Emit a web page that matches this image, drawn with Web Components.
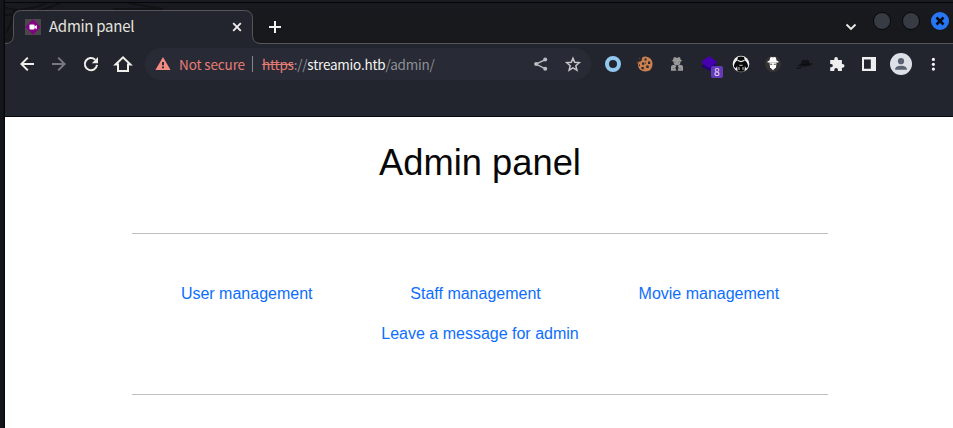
<!DOCTYPE html>
<html lang="en">
<head>
<meta charset="utf-8">
<title>Admin panel</title>
<style>
html,body{margin:0;height:100%;background:#15161b;overflow:hidden}
</style>
</head>
<body>
<browser-window></browser-window>
<script>
const define = (name, html) => customElements.define(name, class extends HTMLElement {
  constructor() {
    super();
    this.attachShadow({mode: 'open'}).innerHTML = html;
  }
});

const icons = {
  back: '<path d="M18 9v2H7.800l4.700 4.700-1.400 1.400L4 10l7.100-7.100 1.400 1.400L7.800 9z" fill="#eff0ea"/>',
  forward: '<path d="M4 9v2h10.200l-4.700 4.700 1.400 1.400L18 10l-7.100-7.100-1.400 1.400L14.200 9z" fill="#77797e"/>',
  reload: '<path d="M17 10.9A6.1 6.1 0 1 1 15.2 5.7" fill="none" stroke="#eff0ea" stroke-width="2"/><path d="M18 3v6.2h-6.2z" fill="#eff0ea"/>',
  home: '<path d="M3.600 10.500 11 3.400l7.400 7.100H16V17H6v-6.500z" fill="none" stroke="#eff0ea" stroke-width="2"/>',
  share: '<path d="M15.500 5.600 6 10l9.500 4.800" fill="none" stroke="#bbbdc0" stroke-width="1.4"/><g fill="#bbbdc0"><circle cx="15.200" cy="5.500" r="2"/><circle cx="6.200" cy="10" r="2.100"/><circle cx="15.200" cy="14.800" r="2"/></g>',
  star: '<path d="m11 4.6 1.7 4.1 4.6.4-3.5 3 1.1 4.5-3.900-2.400-3.900 2.400 1.100-4.500-3.500-3 4.600-.4z" transform="translate(0 -.4)" fill="none" stroke="#c4c6c8" stroke-width="1.5"/>',
  ring: '<circle cx="11" cy="10" r="6" fill="none" stroke="#91c8f0" stroke-width="4"/>',
  cookie: '<path d="M8 3.7q2.1-1.8 4.8-1 5.5 1.3 5.8 7-.3 7.6-7.4 7.9Q4.8 17.2 4 11.2q0-2 .9-3.6Q8.3 7.700 8 3.700" fill="#c88051"/><g fill="#302622"><path d="M10.500 4.500h2v2h-2zM14 7.500h2.200v2.500H14zM8 8.500h2.300v2.300H8zM12.300 11.500h2.400v2.400h-2.400zM7.500 13h2.300v2.300H7.500zM11 8.500h1v1h-1zM5 10.500h1v1.500H5z"/></g><path d="M3.3 7v3M4.8 4.5h1.5" stroke="#68442f"/>',
  agent: '<g fill="#999a99"><path d="M7.200 4.700 8 3.300h1.500l1.500.8 1.500-.8H14l.8 2.600 1.800.8-2 .8q0 2.900-2 3.800H9.400q-2-.9-2-3.800l-2-.8 1.800-.8z"/><path d="m5.800 11.300 3-.5 1.400 1.400-.8 1.600 1 3H5v-4zM16.200 11.300l-3-.5-1.400 1.400.8 1.600-1 3H17v-4z"/></g><path d="M8.300 8h1.700M12 8h1.700M8.500 14.500H7M15 14.500h-1.500" stroke="#6c6e71" stroke-width=".8"/>',
  layers: '<path d="m3 12.400 4.500-3.200 11.300.6L11.500 16.700z" fill="#260078"/><path d="m11 2 8.300 6-8.300 5.900L3 8z" fill="#4700b0"/>',
  gorilla: '<circle cx="11" cy="10" r="8.300" fill="#f1f1ef"/><path d="M8 3q3-1.200 6 0l.8 3.500q2.700 1.500 3.400 6l-2 2-1.300-2.500-.4 5-1.500.7H9l-1.500-.7-.4-5-1.300 2.500-2-2q.7-4.500 3.400-6z" fill="#08090a"/><path d="m7.500 5.800 3.500 1.300 3.500-1.300v1.100L11 8.200 7.500 6.900z" fill="#eee"/><path d="M9.300 11.300h3.400M9 13v3M13 13v3" stroke="#ddd" stroke-width=".9"/>',
  incognito: '<circle cx="11" cy="10" r="8" fill="#363433"/><path d="m8.200 3.600 1.600-.5 1.200.5 1.400-.5 1.500.5.6 3 2 1v1H5.500v-1l2-1z" fill="#fff"/><path d="M7.500 8.500h7l-.5 4.800-3 3-3-3z" fill="#fff"/><path d="M8.200 9.700h2v1h-2zM11.800 9.700h2v1h-2z" fill="#413f40"/>',
  hat: '<path d="M7.300 9.300Q7.500 5.500 10 5.800q1.200.6 2.200 0 3-.5 3.300 2.200v1.400l3.200-.5q-1 3.300-7.700 3.500-6.500.2-7.500-1.500 2.200.2 3.800-1.600" fill="#121317"/><path d="M3 14q2.500.5 4.500-.5M7.500 10.200q4.200 1.100 8-.5" fill="none" stroke="#0b0c0f"/>',
  puzzle: '<path d="M4.200 6.100h4.100V5q0-2 1.800-2t1.800 2v1.100h4V10h.6q2 0 2 1.800t-2 1.900h-.6V17h-4v-1.200q0-1.800-1.800-1.800t-1.800 1.800V17H4.200v-3.800h.9q1.800 0 1.800-1.600T5.100 10h-.9z" fill="#efeff0"/>',
  sidebar: '<path d="M4 3h14v14H4zm2 2.500v9.300h6.800V5.500z" fill="#efeff0" fill-rule="evenodd"/>',
  person: '<circle cx="11" cy="10" r="11" fill="#dde1e7"/><circle cx="11" cy="7.200" r="3.100" fill="#5b6373"/><path d="M5 15.700q0-4 6-4t6 4z" fill="#5b6373"/>',
  dots: '<g fill="#f2f2f2"><circle cx="11.400" cy="5.400" r="1.600"/><circle cx="11.400" cy="10.300" r="1.600"/><circle cx="11.400" cy="15.100" r="1.600"/></g>',
  warn: '<path d="m11 3 7.600 13.100H3.400z" fill="#f28b82"/><path d="M11 8v3.200M11 12.400v1.800" stroke="#282a35" stroke-width="2"/>'
};

customElements.define('tool-icon', class extends HTMLElement {
  constructor() {
    super();
    this.attachShadow({mode: 'open'});
  }
  connectedCallback() {
    this.shadowRoot.innerHTML = `<style>
      :host{display:flex;width:32px;height:32px;align-items:center;justify-content:center;position:relative;flex:none}
      svg{width:22px;height:22px;overflow:visible;display:block}
      ::slotted(b){position:absolute;left:18px;top:18px;width:12px;height:12px;border-radius:2px;background:#6439ba;color:#e6dcf4;font:10.5px/12px "Noto Sans CJK SC",sans-serif;text-align:center}
      </style><svg viewBox="0 -1 22 22">${icons[this.getAttribute('name')]}</svg><slot></slot>`;
  }
});

define('browser-tab', `<style>
  :host{position:relative;display:flex;align-items:center;width:240px;height:34px;box-sizing:border-box;padding:0 9px 0 12px;font:15px/20px "Noto Sans CJK SC",sans-serif;letter-spacing:-.27px;color:#e3e3df}
  .shape{position:absolute;left:-8px;top:0;width:256px;height:34px}
  .fav{width:16px;height:16px;margin-right:8px;position:relative}
  .title{flex:1;position:relative;padding-bottom:2px}
  .close{width:14px;height:14px;position:relative}
  </style>
  <svg class="shape" viewBox="0 0 256 34"><path d="M0 34v-.5q8.500 0 8.500-8V8.500q0-8 8-8h223q8 0 8 8v17q0 8 8.500 8v.5z" fill="#23252e"/><path d="M0 33.500q8.500 0 8.500-8V8.500q0-8 8-8h223q8 0 8 8v17q0 8 8.500 8" fill="none" stroke="#54565b"/></svg>
  <svg class="fav" viewBox="0 0 16 16"><path d="M0 0h16v16H0z" fill="#4a484b"/><path d="m8 .3 7.700 7.700L8 15.700.3 8z" fill="#850083"/><rect x="4.500" y="5.500" width="5" height="5" rx=".8" fill="#fff"/><path d="m9.300 7.700 2.500-1.700v4.200L9.300 8.700z" fill="#fff"/></svg>
  <span class="title"><slot></slot></span>
  <svg class="close" viewBox="0 0 14 14"><path d="m3.200 3.200 7.600 7.600m0-7.600-7.600 7.600" stroke="#eee" stroke-width="1.900"/></svg>`);

define('tab-strip', `<style>
  :host{display:flex;height:41px;box-sizing:border-box;padding:7px 0 0 8px;background:linear-gradient(#191a1f,#17181b);box-shadow:inset 0 -1px #54565b;position:relative}
  .art{position:absolute;left:0;top:0;width:220px;height:30px}
  .plus{width:32px;height:32px;margin-left:6px;margin-top:1px}
  .controls{margin-left:auto;display:flex;height:22px}
  .chev{width:16px;height:16px;margin:9px 14px 0 0}
  .round{width:16px;height:16px;border:1px solid #08090b;border-radius:50%;background:#373b44;margin-top:2px;margin-right:11px}
  .shut{width:18px;height:18px;margin:2px 4px 0 0}
  </style>
  <svg class="art" viewBox="0 0 220 30"><path d="M0 5q18 5 42-5M0 12q30 0 55-12M123 0l35 6h-50M0 31q9-13 9-24" fill="none" stroke="#111215" stroke-width="2"/></svg>
  <browser-tab><slot></slot></browser-tab>
  <svg class="plus" viewBox="0 0 32 32"><path d="M16 10v12M10 16h12" stroke="#f1f1ef" stroke-width="2"/></svg>
  <div class="controls">
    <svg class="chev" viewBox="0 0 16 16"><path d="m3.500 5.500 4.500 4.500 4.500-4.500" fill="none" stroke="#e9eae8" stroke-width="1.900"/></svg>
    <span class="round"></span><span class="round"></span>
    <svg class="shut" viewBox="0 0 18 18"><circle cx="9" cy="9" r="9" fill="#2777f5"/><path d="m5.500 5.500 7 7m0-7-7 7" stroke="#070a12" stroke-width="2.500"/></svg>
  </div>`);

define('address-bar', `<style>
  :host{display:flex;align-items:center;width:446px;height:32px;margin:0 6px;border-radius:16px;background:#282a35;font:13.500px/20px "Noto Sans CJK SC",sans-serif;color:#8d9096;box-sizing:border-box;padding:0 2px}
  .secure{color:#e67d75;width:73px;white-space:nowrap;padding-bottom:1px;letter-spacing:-.13px}
  i{width:1px;height:16px;background:#85868a;margin-right:9px}
  s{color:#e67d75}
  em{font-style:normal;color:#f4f4f0}
  .url{flex:1;white-space:nowrap;padding-bottom:1px;letter-spacing:-.22px}
  </style>
  <tool-icon name="warn"></tool-icon><span class="secure">Not secure</span><i></i>
  <span class="url"><s>https</s>://<em>streamio.htb</em>/admin/</span>
  <tool-icon name="share"></tool-icon><tool-icon name="star"></tool-icon>`);

define('tool-bar', `<style>
  :host{display:flex;height:72px;box-sizing:border-box;padding:4px 0 0 6px;background:#23252e;align-items:flex-start}
  </style>
  <tool-icon name="back"></tool-icon><tool-icon name="forward"></tool-icon><tool-icon name="reload"></tool-icon><tool-icon name="home"></tool-icon>
  <address-bar></address-bar>
  <tool-icon name="ring"></tool-icon><tool-icon name="cookie"></tool-icon><tool-icon name="agent"></tool-icon><tool-icon name="layers"><b>8</b></tool-icon><tool-icon name="gorilla"></tool-icon><tool-icon name="incognito"></tool-icon><tool-icon name="hat"></tool-icon><tool-icon name="puzzle"></tool-icon><tool-icon name="sidebar"></tool-icon><tool-icon name="person"></tool-icon><tool-icon name="dots"></tool-icon>`);

define('page-link', `<style>
  :host{display:block;text-align:center}
  a{color:#0d6efd;text-decoration:none;font:16px/24px "Liberation Sans",Arial,sans-serif}
  </style><a href="#"><slot></slot></a>`);

define('admin-page', `<style>
  :host{display:block;background:#fff;height:311px;box-sizing:border-box;padding:24px 125px 0 127px;color:#080808}
  h1{margin:0;font:400 36.300px/44px "Liberation Sans",Arial,sans-serif;text-align:center}
  hr{height:1px;border:0;background:#bfbfbf;margin:0}
  h1+hr{margin-top:48px}
  nav{display:grid;row-gap:16px;padding:48px 0}
  nav div{display:flex;justify-content:space-around}
  </style>
  <h1>Admin panel</h1><hr>
  <nav><div><page-link>User management</page-link><page-link>Staff management</page-link><page-link>Movie management</page-link></div><div><page-link>Leave a message for admin</page-link></div></nav><hr>`);

define('browser-window', `<style>
  :host{display:block;box-sizing:border-box;width:953px;height:428px;padding:3px 0 0 5px;background:linear-gradient(90deg,#15161b 0 3px,#08090b 4px 5px,transparent 5px),linear-gradient(#191b22 0 2px,#050607 2px 3px,#15161b 3px)}
  .edge{height:1px;background:#08090b}
  </style><tab-strip>Admin panel</tab-strip><tool-bar></tool-bar><div class="edge"></div><admin-page></admin-page>`);
</script>
</body>
</html>
